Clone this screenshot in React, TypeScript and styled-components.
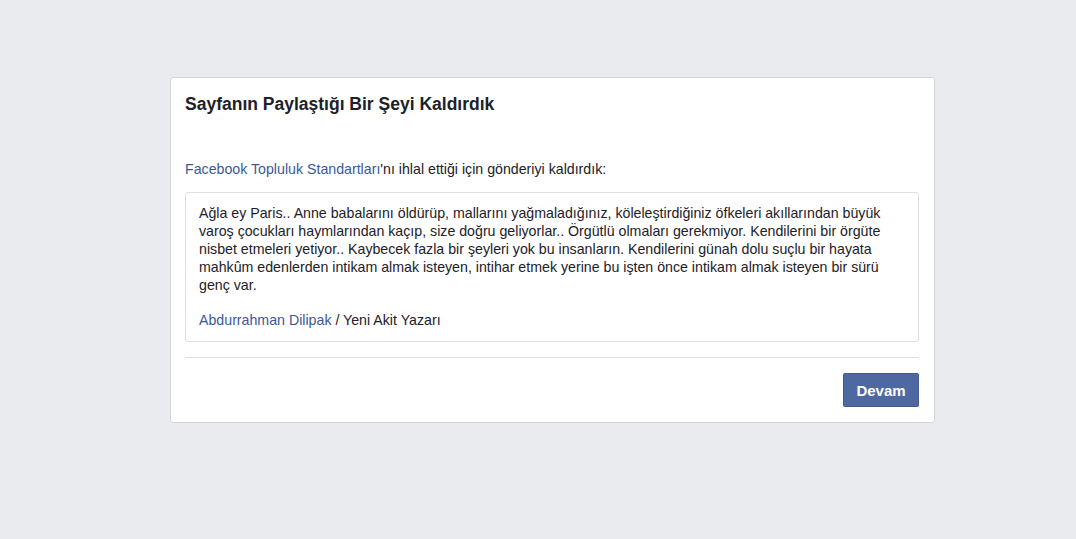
import styled, { createGlobalStyle } from "styled-components";

const GlobalStyle = createGlobalStyle`
  html, body {
    margin: 0;
    padding: 0;
    background: #e9ebee;
    font-family: "Liberation Sans", Arial, Helvetica, sans-serif;
    color: #1d2129;
  }
`;

export default function App() {
  return (
    <>
      <GlobalStyle />
      <Page>
        <Card>
          <Title>Sayfanın Paylaştığı Bir Şeyi Kaldırdık</Title>
          <Intro>
            <Link>Facebook Topluluk Standartları</Link>'nı ihlal ettiği için
            gönderiyi kaldırdık:
          </Intro>
          <Quote>
            <p>
              Ağla ey Paris.. Anne babalarını öldürüp, mallarını
              yağmaladığınız, köleleştirdiğiniz öfkeleri akıllarından büyük
              varoş çocukları haymlarından kaçıp, size doğru geliyorlar..
              Örgütlü olmaları gerekmiyor. Kendilerini bir örgüte nisbet
              etmeleri yetiyor.. Kaybecek fazla bir şeyleri yok bu insanların.
              Kendilerini günah dolu suçlu bir hayata mahkûm edenlerden
              intikam almak isteyen, intihar etmek yerine bu işten önce
              intikam almak isteyen bir sürü genç var.
            </p>
            <p>
              <Link>Abdurrahman Dilipak</Link> / Yeni Akit Yazarı
            </p>
          </Quote>
          <Footer>
            <Button>Devam</Button>
          </Footer>
        </Card>
      </Page>
    </>
  );
}

const Page = styled.div`
  padding: 77px 0 0 170px;
  min-height: 539px;
  box-sizing: border-box;
`;

const Card = styled.div`
  width: 765px;
  box-sizing: border-box;
  background: #fff;
  border: 1px solid #d3d6db;
  border-radius: 3px;
  padding: 15px 15px 15px 14px;
`;

const Title = styled.h2`
  margin: 0;
  font-size: 17.5px;
  font-weight: 700;
  line-height: 22px;
  color: #1d2129;
`;

const Intro = styled.div`
  margin-top: 45px;
  font-size: 14.2px;
  line-height: 18px;
  color: #1d2129;
`;

const Link = styled.span`
  color: #3b5998;
`;

const Quote = styled.div`
  margin-top: 14px;
  border: 1px solid #dddfe2;
  border-radius: 3px;
  padding: 11px 13px 12px;
  font-size: 14.2px;
  line-height: 18px;
  color: #1d2129;
  p {
    margin: 0;
  }
  p + p {
    margin-top: 17px;
  }
`;

const Footer = styled.div`
  margin-top: 15px;
  border-top: 1px solid #dddfe2;
  padding-top: 15px;
  display: flex;
  justify-content: flex-end;
`;

const Button = styled.button`
  height: 34px;
  width: 76px;
  background: #4e69a2;
  border: 1px solid #435a8b;
  border-radius: 2px;
  color: #fff;
  font-family: "Liberation Sans", Arial, Helvetica, sans-serif;
  font-size: 15px;
  font-weight: 700;
  padding: 0;
  cursor: pointer;
`;
